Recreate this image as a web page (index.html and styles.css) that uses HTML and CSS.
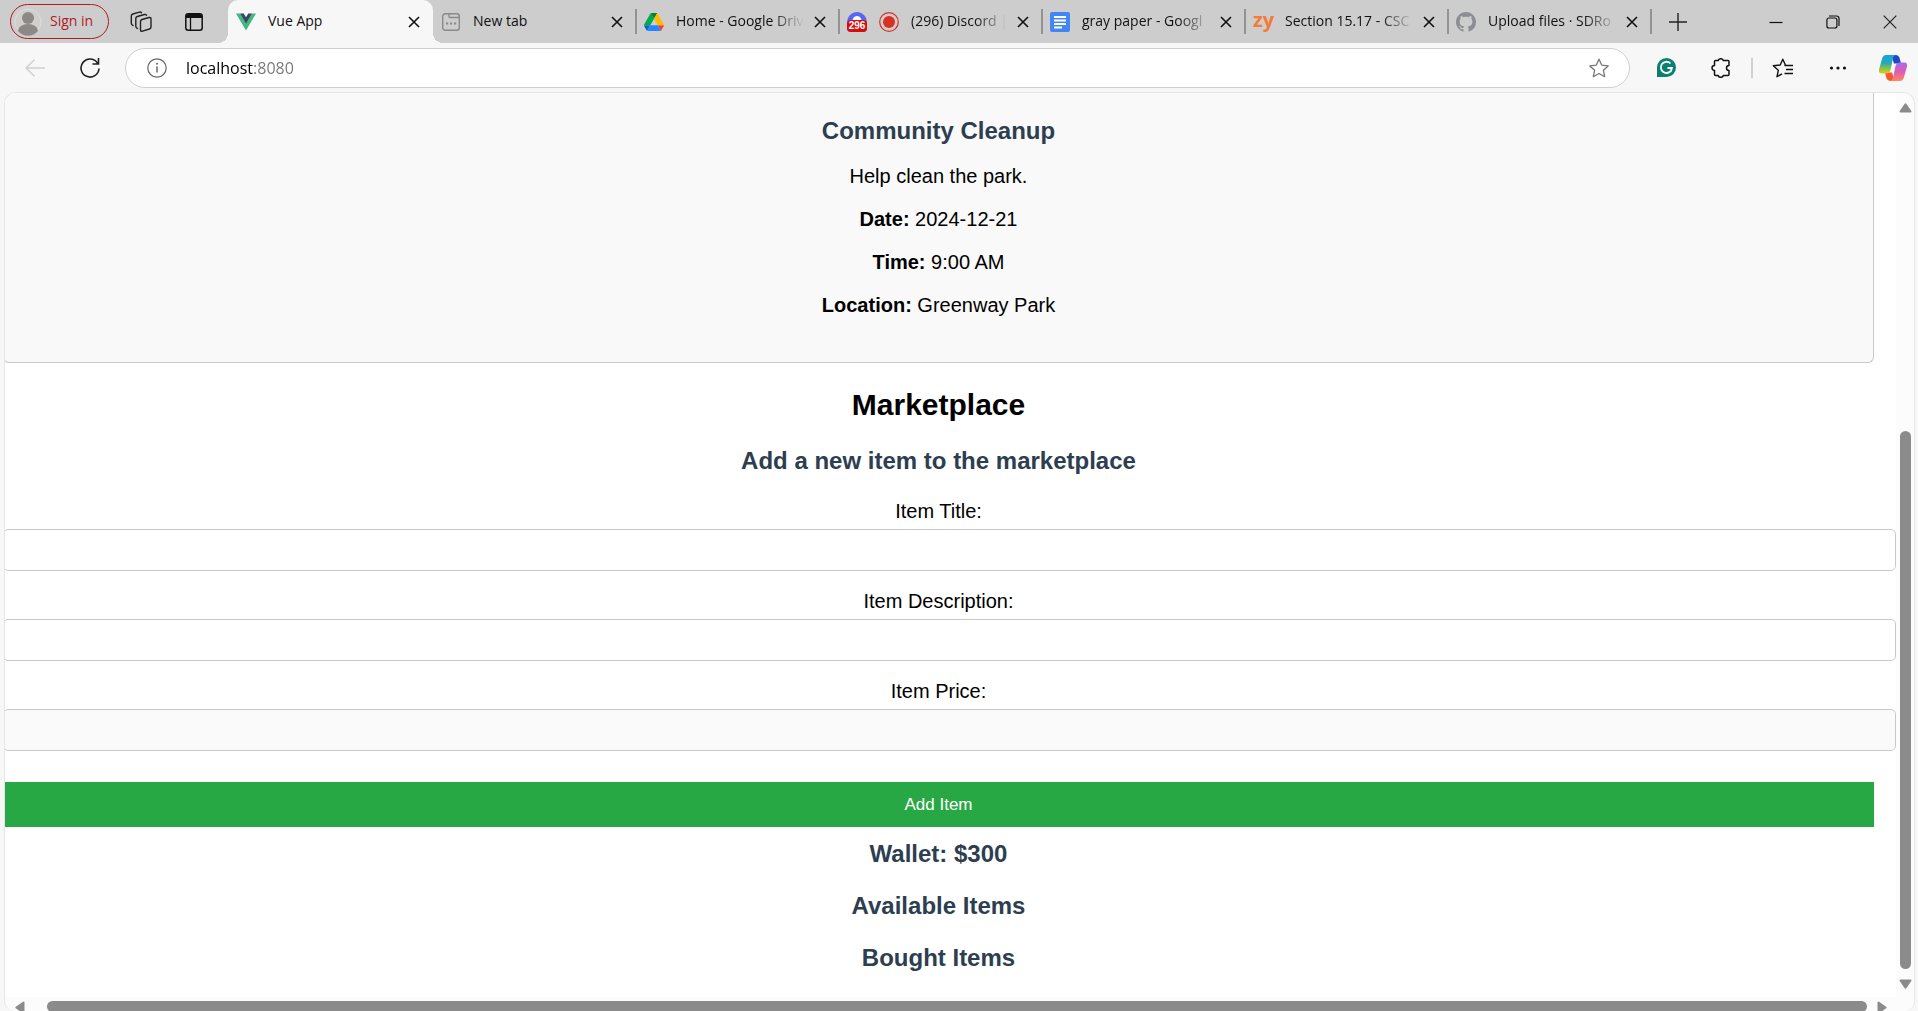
FILE: index.html
```html
<!DOCTYPE html>
<html lang="en">
<head>
<meta charset="utf-8">
<title>Vue App</title>
<link rel="stylesheet" href="styles.css">
</head>
<body>
<svg class="defs" width="0" height="0" aria-hidden="true">
  <symbol id="x" viewBox="0 0 12 12"><path d="M1 1l10 10M11 1L1 11" fill="none" stroke="#111" stroke-width="1.6"/></symbol>
</svg>

<header class="tabstrip">
  <button class="signin">
    <svg width="28" height="28" viewBox="0 0 28 28"><circle cx="14" cy="14" r="13" fill="#d1cecb" stroke="#dedcda"/><circle cx="14" cy="10" r="6" fill="#8b8886"/><path d="M4 23a10 7 0 0 1 20 0 13 13 0 0 1-20 0z" fill="#8b8886"/></svg>
    <span class="signin-text">Sign in</span>
  </button>
  <button class="icon-btn workspaces" aria-label="Workspaces">
    <svg width="22" height="22" viewBox="0 0 22 22" fill="none" stroke="#222" stroke-width="1.4" stroke-linejoin="round" stroke-linecap="round"><path d="M10.5 10.5q0-1.500 1.500-2l7-2q2-.4 2 1.500v8q0 1.500-1.500 2l-7 2.200q-2 .5-2-1.500z"/><path d="M7.500 17.500l-1-.8q-.7-.6-.7-1.700V7.500q0-1.500 1.500-2L14.500 3.500q1.500-.4 2 .8"/><path d="M3 14.500l-1-.8q-.7-.6-.7-1.700V5q0-1.500 1.500-2L9.500 1.100q1.300-.3 2 .7"/></svg>
  </button>
  <button class="icon-btn tabactions" aria-label="Tab actions">
    <svg width="18" height="18" viewBox="0 0 18 18"><rect x=".8" y=".8" width="16.400" height="16.400" rx="2.500" fill="none" stroke="#111" stroke-width="1.500"/><path d="M1 3.500Q1 1 3.500 1h11Q17 1 17 3.500V5H1z" fill="#111"/><path d="M5.500 5v12" stroke="#111" stroke-width="1.300"/></svg>
  </button>

  <nav class="tabs" aria-label="Tabs">
    <div class="tab active">
      <svg width="20" height="18" viewBox="0 0 20 18"><path d="M0 .5h4l6 10 6-10h4L10 17.500z" fill="#41b883"/><path d="M4 .5h3.700L10 4.300 12.300.5H16l-6 10.200z" fill="#35495e"/></svg>
      <a class="label" href="#">Vue App</a>
      <button class="close" aria-label="Close tab"><svg width="12" height="12"><use href="#x"/></svg></button>
    </div>
    <div class="tab">
      <svg width="20" height="20" viewBox="0 0 20 20" fill="none" stroke="#8a8a8a" stroke-width="1.400"><rect x="1.700" y="1.700" width="16.600" height="16.600" rx="2.500"/><path d="M8 2v2.500q0 1 1 1h9"/><path d="M5 11.500h2.200M9 11.500h2.200M13 11.500h2.200" stroke-width="2"/></svg>
      <a class="label" href="#">New tab</a>
      <button class="close" aria-label="Close tab"><svg width="12" height="12"><use href="#x"/></svg></button>
    </div>
    <div class="tab">
      <svg width="20" height="18" viewBox="0 0 87.300 78"><path d="M6.600 66.850l3.850 6.650c.8 1.400 1.950 2.500 3.300 3.300L27.500 53H0c0 1.550.4 3.100 1.200 4.500z" fill="#0066da"/><path d="M43.650 25L29.900 1.200c-1.350.8-2.500 1.900-3.300 3.300L1.200 48.500A9 9 0 0 0 0 53h27.500z" fill="#00ac47"/><path d="M73.550 76.800c1.350-.8 2.500-1.900 3.300-3.300l1.600-2.750L86.100 57.500c.8-1.400 1.200-2.950 1.200-4.500H59.800l5.850 11.500z" fill="#ea4335"/><path d="M43.650 25L57.400 1.200C56.050.4 54.500 0 52.900 0H34.400c-1.600 0-3.150.45-4.500 1.200z" fill="#00832d"/><path d="M59.800 53H27.500L13.750 76.800c1.350.8 2.900 1.200 4.500 1.200h50.800c1.600 0 3.150-.45 4.500-1.200z" fill="#2684fc"/><path d="M73.400 26.500L60.700 4.500c-.8-1.400-1.950-2.500-3.300-3.300L43.650 25l16.150 28h27.450c0-1.550-.4-3.100-1.200-4.500z" fill="#ffba00"/></svg>
      <a class="label fade" href="#">Home - Google Driv</a>
      <button class="close" aria-label="Close tab"><svg width="12" height="12"><use href="#x"/></svg></button>
    </div>
    <div class="tab">
      <span class="discord"><span class="count">296</span></span>
      <svg width="20" height="20" viewBox="0 0 20 20"><circle cx="10" cy="10" r="9.300" fill="none" stroke="#d93025" stroke-width="1.200"/><circle cx="10" cy="10" r="6" fill="#d93025"/></svg>
      <a class="label fade" href="#">(296) Discord |</a>
      <button class="close" aria-label="Close tab"><svg width="12" height="12"><use href="#x"/></svg></button>
    </div>
    <div class="tab">
      <svg width="20" height="20" viewBox="0 0 20 20"><rect width="20" height="20" rx="2" fill="#4285f4"/><path d="M4 5h12M4 8.500h12M4 12h12M4 15.500h8" stroke="#fff" stroke-width="1.800"/></svg>
      <a class="label fade" href="#">gray paper - Googl</a>
      <button class="close" aria-label="Close tab"><svg width="12" height="12"><use href="#x"/></svg></button>
    </div>
    <div class="tab">
      <span class="zy">zy</span>
      <a class="label fade" href="#">Section 15.17 - CSC</a>
      <button class="close" aria-label="Close tab"><svg width="12" height="12"><use href="#x"/></svg></button>
    </div>
    <div class="tab">
      <svg width="20" height="20" viewBox="0 0 16 16"><path fill="#8b8f94" d="M8 0C3.580 0 0 3.580 0 8c0 3.540 2.290 6.530 5.470 7.590.4.070.55-.17.55-.38 0-.19-.01-.82-.01-1.490-2.010.37-2.530-.49-2.690-.94-.09-.23-.48-.94-.82-1.130-.28-.15-.68-.52-.01-.53.63-.01 1.080.58 1.230.82.72 1.210 1.870.87 2.330.66.07-.52.28-.87.51-1.070-1.780-.2-3.640-.89-3.640-3.950 0-.87.31-1.590.82-2.150-.08-.2-.36-1.020.08-2.120 0 0 .67-.21 2.200.82.64-.18 1.320-.27 2-.27s1.360.09 2 .27c1.530-1.040 2.200-.82 2.200-.82.44 1.100.16 1.920.08 2.120.51.56.82 1.270.82 2.150 0 3.070-1.870 3.750-3.650 3.950.29.25.54.73.54 1.480 0 1.070-.01 1.930-.01 2.200 0 .21.15.46.55.38A8.010 8.010 0 0 0 16 8c0-4.420-3.580-8-8-8z"/></svg>
      <a class="label fade" href="#">Upload files · SDRo</a>
      <button class="close" aria-label="Close tab"><svg width="12" height="12"><use href="#x"/></svg></button>
    </div>
  </nav>
  <button class="icon-btn newtab" aria-label="New tab"><svg width="18" height="18" viewBox="0 0 18 18"><path d="M9 0v18M0 9h18" stroke="#222" stroke-width="1.400"/></svg></button>
  <div class="window-controls">
    <button class="icon-btn" aria-label="Minimize"><svg width="14" height="14" viewBox="0 0 14 14"><path d="M.5 7.500h13" stroke="#111" stroke-width="1.200"/></svg></button>
    <button class="icon-btn" aria-label="Restore"><svg width="14" height="14" viewBox="0 0 14 14" fill="none" stroke="#111" stroke-width="1.200"><rect x=".9" y="3" width="10" height="10" rx="2"/><path d="M3 1h7.500Q13 1 13 3.500V11"/></svg></button>
    <button class="icon-btn" aria-label="Close"><svg width="14" height="14" viewBox="0 0 14 14"><path d="M.7.7l12.600 12.600M13.300.7L.7 13.300" stroke="#222" stroke-width="1.200"/></svg></button>
  </div>
</header>

<div class="toolbar">
  <button class="icon-btn back" aria-label="Back" disabled><svg width="20" height="18" viewBox="0 0 20 18" fill="none" stroke="#cfcfcf" stroke-width="1.400"><path d="M20 9H1M9.500.7L1 9l8.500 8.300"/></svg></button>
  <button class="icon-btn reload" aria-label="Reload"><svg width="20" height="22" viewBox="0 0 20 22" fill="none" stroke="#222" stroke-width="1.600"><path d="M17.800 6.500A9 9 0 1 0 19 11.500M18.500 1v6h-6"/></svg></button>
  <div class="address">
    <svg width="20" height="20" viewBox="0 0 20 20"><circle cx="10" cy="10" r="9.200" fill="none" stroke="#666" stroke-width="1.200"/><path d="M10 8.500v6" stroke="#666" stroke-width="1.500"/><circle cx="10" cy="5.800" r="1" fill="#666"/></svg>
    <input class="url" type="text" aria-label="Address" value="localhost:8080">
    <button class="icon-btn star" aria-label="Add to favorites"><svg width="22" height="20" viewBox="0 0 22 20"><path d="M11 1.200l2.700 5.900 6.500.8-4.800 4.400 1.300 6.400L11 15.500l-5.700 3.200 1.300-6.400L1.800 7.900l6.500-.8z" fill="none" stroke="#777" stroke-width="1.300" stroke-linejoin="round"/></svg></button>
  </div>
  <div class="tools">
    <button class="icon-btn" aria-label="Grammarly"><svg width="19" height="19" viewBox="0 0 19 19"><path d="M9.500 0A9.500 9.500 0 0 0 0 9.500V19h9.500a9.500 9.500 0 0 0 0-19z" fill="#0a8070"/><path d="M13.500 5.500A5.600 5.600 0 1 0 15 10h-4.500M15 10l-1.500 4" fill="none" stroke="#fff" stroke-width="1.800"/></svg></button>
    <button class="icon-btn" aria-label="Extensions"><svg width="20" height="20" viewBox="0 0 20 20"><path d="M4.500 2.500h2.700a2.600 2.200 0 0 1 5.100 0H17q1 0 1 1v4a2.500 2.500 0 1 0 0 5v4q0 1-1 1h-4.700a2.600 2.200 0 0 1-5.100 0H4.500q-1 0-1-1v-4a2.500 2.500 0 0 1 0-5v-4q0-1 1-1z" fill="none" stroke="#111" stroke-width="1.500" stroke-linejoin="round"/></svg></button>
    <span class="divider"></span>
    <button class="icon-btn" aria-label="Favorites"><svg width="22" height="20" viewBox="0 0 22 20" fill="none" stroke="#111" stroke-width="1.400" stroke-linejoin="round"><path d="M13.500 7.200L10.800 1.200 8.200 7l-6.900.8 5 4.500L5 18.700l5-2.900"/><path d="M12.500 7.500H21M14 11.500h7M12.500 15.500H21"/></svg></button>
    <button class="icon-btn" aria-label="Settings and more"><svg width="18" height="4" viewBox="0 0 18 4" fill="#111"><circle cx="2.500" cy="2" r="1.600"/><circle cx="9" cy="2" r="1.600"/><circle cx="15.500" cy="2" r="1.600"/></svg></button>
    <button class="icon-btn" aria-label="Copilot"><svg width="28" height="26" viewBox="0 0 28 26">
      <defs>
        <linearGradient id="ca" x1="0" y1="0" x2="0" y2="1"><stop offset="0" stop-color="#19a0ea"/><stop offset=".45" stop-color="#28a9b5"/><stop offset=".75" stop-color="#8fc63e"/><stop offset="1" stop-color="#e8c61c"/></linearGradient>
        <linearGradient id="cb" x1="0" y1="0" x2="0" y2="1"><stop offset="0" stop-color="#a56cf0"/><stop offset=".5" stop-color="#e05bb4"/><stop offset="1" stop-color="#fb8a5c"/></linearGradient>
      </defs>
      <path d="M12 0h5q2.700 0 3.500 2.700L22 8.500h-7z" fill="#1d49c4"/>
      <path d="M16 26h-5q-2.700 0-3.500-2.700L6 17.500h7z" fill="#f4592f"/>
      <path d="M7 0h10q-2 0-3 3l-2.500 12q-1 3.500-4 3.500H3q-4 0-3-4L3 4Q4 0 7 0z" fill="url(#ca)"/>
      <path d="M21 26H11q2 0 3-3l2.500-12q1-3.500 4-3.500H25q4 0 3 4l-3 10.500q-1 4-4 4z" fill="url(#cb)"/>
    </svg></button>
  </div>
</div>

<div class="viewport">
  <main class="page">
    <section class="card">
      <h3>Community Cleanup</h3>
      <p>Help clean the park.</p>
      <p><strong>Date:</strong> 2024-12-21</p>
      <p><strong>Time:</strong> 9:00 AM</p>
      <p><strong>Location:</strong> Greenway Park</p>
    </section>
    <h2>Marketplace</h2>
    <h3>Add a new item to the marketplace</h3>
    <form class="item-form">
      <label for="title">Item Title:</label>
      <input id="title" type="text">
      <label for="description">Item Description:</label>
      <input id="description" type="text">
      <label for="price">Item Price:</label>
      <input id="price" class="price" type="number">
      <button type="button" class="add">Add Item</button>
    </form>
    <div class="lists">
      <h3>Wallet: $300</h3>
      <h3>Available Items</h3>
      <h3>Bought Items</h3>
    </div>
  </main>
  <div class="vbar">
    <svg width="13" height="10" viewBox="0 0 13 10"><path d="M5.700.8q.8-.9 1.600 0l5 7.200q.6 1.500-.8 1.500h-10Q.1 9.500.7 8z" fill="#8b8b8b"/></svg>
    <div class="vtrack"><div class="vthumb"></div></div>
    <svg width="13" height="10" viewBox="0 0 13 10"><path d="M5.700 9.200q.8.900 1.600 0l5-7.200q.6-1.500-.8-1.500h-10Q.1.500.7 2z" fill="#8b8b8b"/></svg>
  </div>
  <div class="hbar">
    <svg width="10" height="13" viewBox="0 0 10 13"><path d="M.8 5.700q-.9.8 0 1.600l7.200 5q1.500.6 1.500-.8v-10Q9.500.1 8 .7z" fill="#8b8b8b"/></svg>
    <div class="hthumb"></div>
    <svg width="10" height="13" viewBox="0 0 10 13"><path d="M9.200 5.700q.9.800 0 1.600l-7.200 5q-1.500.6-1.500-.8v-10Q.5.100 2 .7z" fill="#8b8b8b"/></svg>
  </div>
</div>
</body>
</html>
```
FILE: styles.css
```css
* { box-sizing: border-box; }

body {
  margin: 0;
  height: 100vh;
  overflow: hidden;
  display: flex;
  flex-direction: column;
  background: #f7f7f7;
  color: #000;
  font-family: "Open Sans", "Noto Sans", sans-serif;
  font-size: 14px;
}

.defs { display: none; }

button {
  margin: 0;
  padding: 0;
  border: 0;
  background: none;
  color: inherit;
  font: inherit;
}

.icon-btn,
.close {
  display: flex;
  align-items: center;
  justify-content: center;
  flex: none;
}

svg { flex: none; }

/* Tab strip */
.tabstrip {
  display: flex;
  align-items: center;
  flex: none;
  height: 43px;
  padding-left: 10px;
  background: #cdcdcd;
}

.signin {
  display: flex;
  align-items: center;
  gap: 8px;
  flex: none;
  width: 99px;
  height: 35px;
  padding-left: 3px;
  border: 1px solid #b11a1f;
  border-radius: 18px;
  color: #b11a1f;
}

.signin-text,
.label { padding-bottom: 2px; }

.workspaces { width: 32px; margin-left: 16px; }
.tabactions { width: 32px; margin-left: 21px; }

.tabs {
  display: flex;
  align-self: stretch;
  flex: 1;
  min-width: 0;
  max-width: 1423px;
  margin-left: 18px;
}

.tab {
  display: flex;
  align-items: center;
  gap: 12px;
  flex: 0 1 203px;
  min-width: 0;
  padding: 0 7px 0 8px;
  position: relative;
}

.tab:not(.active)::after {
  content: "";
  position: absolute;
  right: -1px;
  top: 9px;
  width: 2px;
  height: 25px;
  background: #939393;
}

.tab.active {
  flex-basis: 205px;
  background: #f7f7f7;
  border-radius: 10px 10px 0 0;
}

.tab.active::before,
.tab.active::after {
  content: "";
  position: absolute;
  bottom: 0;
  width: 10px;
  height: 10px;
}

.tab.active::before {
  left: -10px;
  background: radial-gradient(circle at 0 0, transparent 10px, #f7f7f7 10px);
}

.tab.active::after {
  right: -10px;
  background: radial-gradient(circle at 100% 0, transparent 10px, #f7f7f7 10px);
}

.label {
  flex: 1;
  min-width: 0;
  overflow: hidden;
  color: #111;
  text-decoration: none;
  white-space: nowrap;
  line-height: 24px;
}

.fade {
  -webkit-mask-image: linear-gradient(to left, transparent, #000 32px);
  mask-image: linear-gradient(to left, transparent, #000 32px);
}

.close { width: 24px; height: 24px; margin-left: -8px; }

.discord {
  display: flex;
  align-items: flex-end;
  flex: none;
  width: 20px;
  height: 20px;
  border-radius: 10px 10px 4px 4px;
  background: radial-gradient(ellipse at 50% 45%, #fff 4px, #5865f2 5px);
}

.count {
  width: 20px;
  border-radius: 4px;
  background: #d90b0b;
  color: #fff;
  font: bold 10px/12px "Liberation Sans", sans-serif;
  text-align: center;
}

.zy {
  flex: none;
  width: 20px;
  color: #f47b35;
  font: bold 20px/24px "Open Sans", sans-serif;
  padding-bottom: 4px;
}

.newtab { width: 32px; margin-left: 11px; }

.window-controls { display: flex; margin-left: auto; }
.window-controls .icon-btn { width: 57px; height: 43px; }

/* Toolbar */
.toolbar {
  display: flex;
  align-items: center;
  flex: none;
  height: 49px;
  padding: 0 9px 0 19px;
}

.back { width: 32px; }
.reload { width: 32px; margin-left: 23px; }

.address {
  display: flex;
  align-items: center;
  flex: 1;
  min-width: 0;
  height: 40px;
  margin-left: 19px;
  padding: 0 19px 0 21px;
  border: 1px solid #cfcfcf;
  border-radius: 20px;
  background: #fff;
}

.url {
  flex: 1;
  min-width: 0;
  margin-left: 19px;
  padding: 0;
  border: 0;
  outline: 0;
  background: linear-gradient(to right, #000 68px, #767676 68px);
  -webkit-background-clip: text;
  background-clip: text;
  color: transparent;
  font: 16px/24px "Open Sans", "Noto Sans", sans-serif;
}

.tools {
  display: flex;
  align-items: center;
  gap: 23px;
  margin-left: 20px;
}

.tools .icon-btn { width: 32px; }
.divider { width: 2px; height: 20px; margin: 0 -9px; background: #d0d0d0; }

/* Browser viewport with its scroll bars */
.viewport {
  display: grid;
  grid-template-columns: minmax(0, 1fr) 18px;
  grid-template-rows: minmax(0, 1fr) 14px;
  flex: 1;
  min-height: 0;
  margin: 0 3px 0 4px;
  overflow: hidden;
  border: 1px solid #e6e6e6;
  border-bottom: 0;
  border-radius: 12px 12px 10px 10px;
  background: #fcfcfc;
}

.vbar {
  display: flex;
  flex-direction: column;
  align-items: center;
  gap: 10px;
  padding: 10px 0 8px;
}

.vtrack {
  display: grid;
  grid-template-rows: 308fr 537fr;
  flex: 1;
}

.vthumb {
  grid-row: 2;
  width: 11px;
  border-radius: 6px;
  background: #8b8b8b;
}

.hbar {
  display: flex;
  align-items: flex-start;
  gap: 10px;
  padding: 4px 9px 0 10px;
}

.hthumb {
  flex: 1;
  height: 11px;
  margin-left: 12px;
  border-radius: 6px;
  background: #8b8b8b;
}

/* Page content, scrolled two pixels to the right */
.page {
  min-width: 0;
  overflow: hidden;
  margin-left: -2px;
  padding-right: 22px;
  background: #fff;
  font-family: "Liberation Sans", Arial, sans-serif;
  font-size: 20px;
  line-height: 23px;
  text-align: center;
}

.page h2 { margin: 25px 0; font-size: 30px; line-height: 34px; }
.page h3 { margin: 25px 0; color: #2c3e50; font-size: 24px; line-height: 27px; }
.page p { margin: 20px 0; }

.card {
  padding: 24px 25px 25px;
  border: 1px solid #c9c9c9;
  border-top: 0;
  border-radius: 0 0 6px 6px;
  background: #f9f9f9;
}

.page .card h3 { margin: 0 0 21px; }

.item-form { padding-top: 1px; }
.item-form label { display: block; margin-bottom: 6px; }

.item-form input {
  display: block;
  width: calc(100% + 22px);
  height: 42px;
  margin: 0 0 19px;
  padding: 10px;
  border: 1px solid #c9c9c9;
  border-radius: 5px;
  background: #fff;
  font: inherit;
}

.item-form .price { margin-bottom: 31px; background: #fafafa; }

.add {
  display: block;
  width: 100%;
  height: 45px;
  background: #28a745;
  color: #fff;
  font-size: 17px;
}

.lists { padding-top: 13px; }
.page .lists h3:first-child { margin-top: 0; }
```
